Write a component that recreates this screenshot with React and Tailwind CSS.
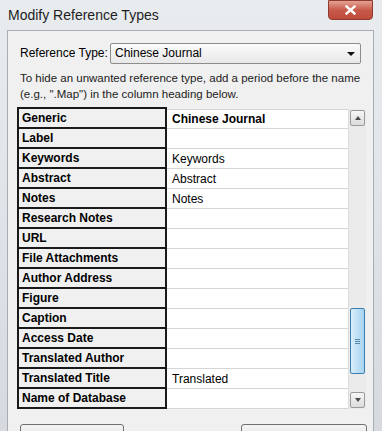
import React from "react";

const rows = [
  ["Generic", "Chinese Journal"],
  ["Label", ""],
  ["Keywords", "Keywords"],
  ["Abstract", "Abstract"],
  ["Notes", "Notes"],
  ["Research Notes", ""],
  ["URL", ""],
  ["File Attachments", ""],
  ["Author Address", ""],
  ["Figure", ""],
  ["Caption", ""],
  ["Access Date", ""],
  ["Translated Author", ""],
  ["Translated Title", "Translated"],
  ["Name of Database", ""],
];

export default function App() {
  return (
    <div
      className="relative w-[382px] h-[431px] overflow-hidden bg-gradient-to-b from-[#e9ecef] to-[#d6dadf] text-black"
      style={{ fontFamily: '"Liberation Sans", Arial, sans-serif' }}
    >
      {/* title bar */}
      <div className="h-[30px] flex items-center pl-[8px] text-[14px] text-[#1e1e1e]">
        Modify Reference Types
      </div>
      <div className="absolute top-0 right-[9px] w-[45px] h-[20px] rounded-b-[4px] border border-[#8e3a2e] bg-gradient-to-b from-[#e3a193] via-[#c85a4b] to-[#bf4a3a] flex items-center justify-center">
        <svg width="11" height="10" viewBox="0 0 11 10">
          <path d="M1.5 1.5 L9.5 8.5 M9.5 1.5 L1.5 8.5" stroke="#fff" strokeWidth="2.4" strokeLinecap="square" />
        </svg>
      </div>

      {/* body */}
      <div className="absolute left-[7px] right-[8px] top-[30px] bottom-0 bg-[#f0f0f0] border border-[#a9adb3] border-b-0">
        <div className="flex items-center h-[20px] mt-[12px] pl-[12px]">
          <span className="w-[90px] text-[12px]">Reference Type:</span>
          <div className="w-[251px] h-[21px] border border-[#8d8d8d] rounded-[2px] bg-gradient-to-b from-[#fbfbfb] to-[#e8e8e8] flex items-center pl-[4px] text-[12px] relative">
            Chinese Journal
            <svg className="absolute right-[5px] top-[8px]" width="8" height="4" viewBox="0 0 8 4">
              <path d="M0 0 H8 L4 4 Z" fill="#111" />
            </svg>
          </div>
        </div>

        <div className="pl-[12px] mt-[7px] text-[11.5px] leading-[16px] text-[#222]">
          <div>To hide an unwanted reference type, add a period before the name</div>
          <div>(e.g., ".Map") in the column heading below.</div>
        </div>

        <div className="ml-[9px] mt-[7px] flex">
          <div className="w-[331px]">
            {rows.map(([name, value], i) => (
              <div key={name} className="flex h-[20px]">
                <div
                  className={`w-[150px] border-x-2 border-b-2 border-[#1a1a1a] ${i === 0 ? "border-t-2 h-[22px] -mt-[2px]" : ""} bg-[#f0f0f0] pl-[3px] flex items-center text-[12px] font-bold`}
                >
                  {name}
                </div>
                <div
                  className={`flex-1 bg-white border-b border-[#d5d5d5] ${i === 0 ? "border-t font-bold" : ""} flex items-center pl-[5px] text-[12px]`}
                >
                  {value}
                </div>
              </div>
            ))}
          </div>
          <div className="w-[18px] h-[300px] bg-[#ebebeb] border-l border-[#dcdcdc] flex flex-col items-center pt-[1px] relative">
            <div className="w-[15px] h-[16px] border border-[#9a9a9a] rounded-[2px] bg-gradient-to-b from-[#f6f6f6] to-[#dcdcdc] flex items-center justify-center">
              <svg width="6" height="4" viewBox="0 0 6 4">
                <path d="M0 4 L3 0 L6 4 Z" fill="#4a4a4a" />
              </svg>
            </div>
            <div className="absolute left-[1px] top-[199px] w-[15px] h-[66px] border border-[#3c7fb1] rounded-[2px] bg-gradient-to-r from-[#d9eefb] via-[#bfe0f6] to-[#a9d3f0] flex items-center justify-center">
              <div className="flex flex-col gap-[1px]">
                <div className="w-[5px] h-[1px] bg-[#5a88a8]" />
                <div className="w-[5px] h-[1px] bg-[#5a88a8]" />
                <div className="w-[5px] h-[1px] bg-[#5a88a8]" />
              </div>
            </div>
            <div className="absolute left-[1px] bottom-[1px] w-[15px] h-[16px] border border-[#9a9a9a] rounded-[2px] bg-gradient-to-b from-[#f6f6f6] to-[#dcdcdc] flex items-center justify-center">
              <svg width="6" height="4" viewBox="0 0 6 4">
                <path d="M0 0 H6 L3 4 Z" fill="#4a4a4a" />
              </svg>
            </div>
          </div>
        </div>

        <div className="flex justify-between mt-[15px] pl-[12px] pr-[6px]">
          <div className="w-[104px] h-[22px] border border-[#707070] rounded-[3px] bg-gradient-to-b from-[#f4f4f4] to-[#dcdcdc]" />
          <div className="w-[126px] h-[22px] border border-[#707070] rounded-[3px] bg-gradient-to-b from-[#f4f4f4] to-[#dcdcdc]" />
        </div>
      </div>
    </div>
  );
}
